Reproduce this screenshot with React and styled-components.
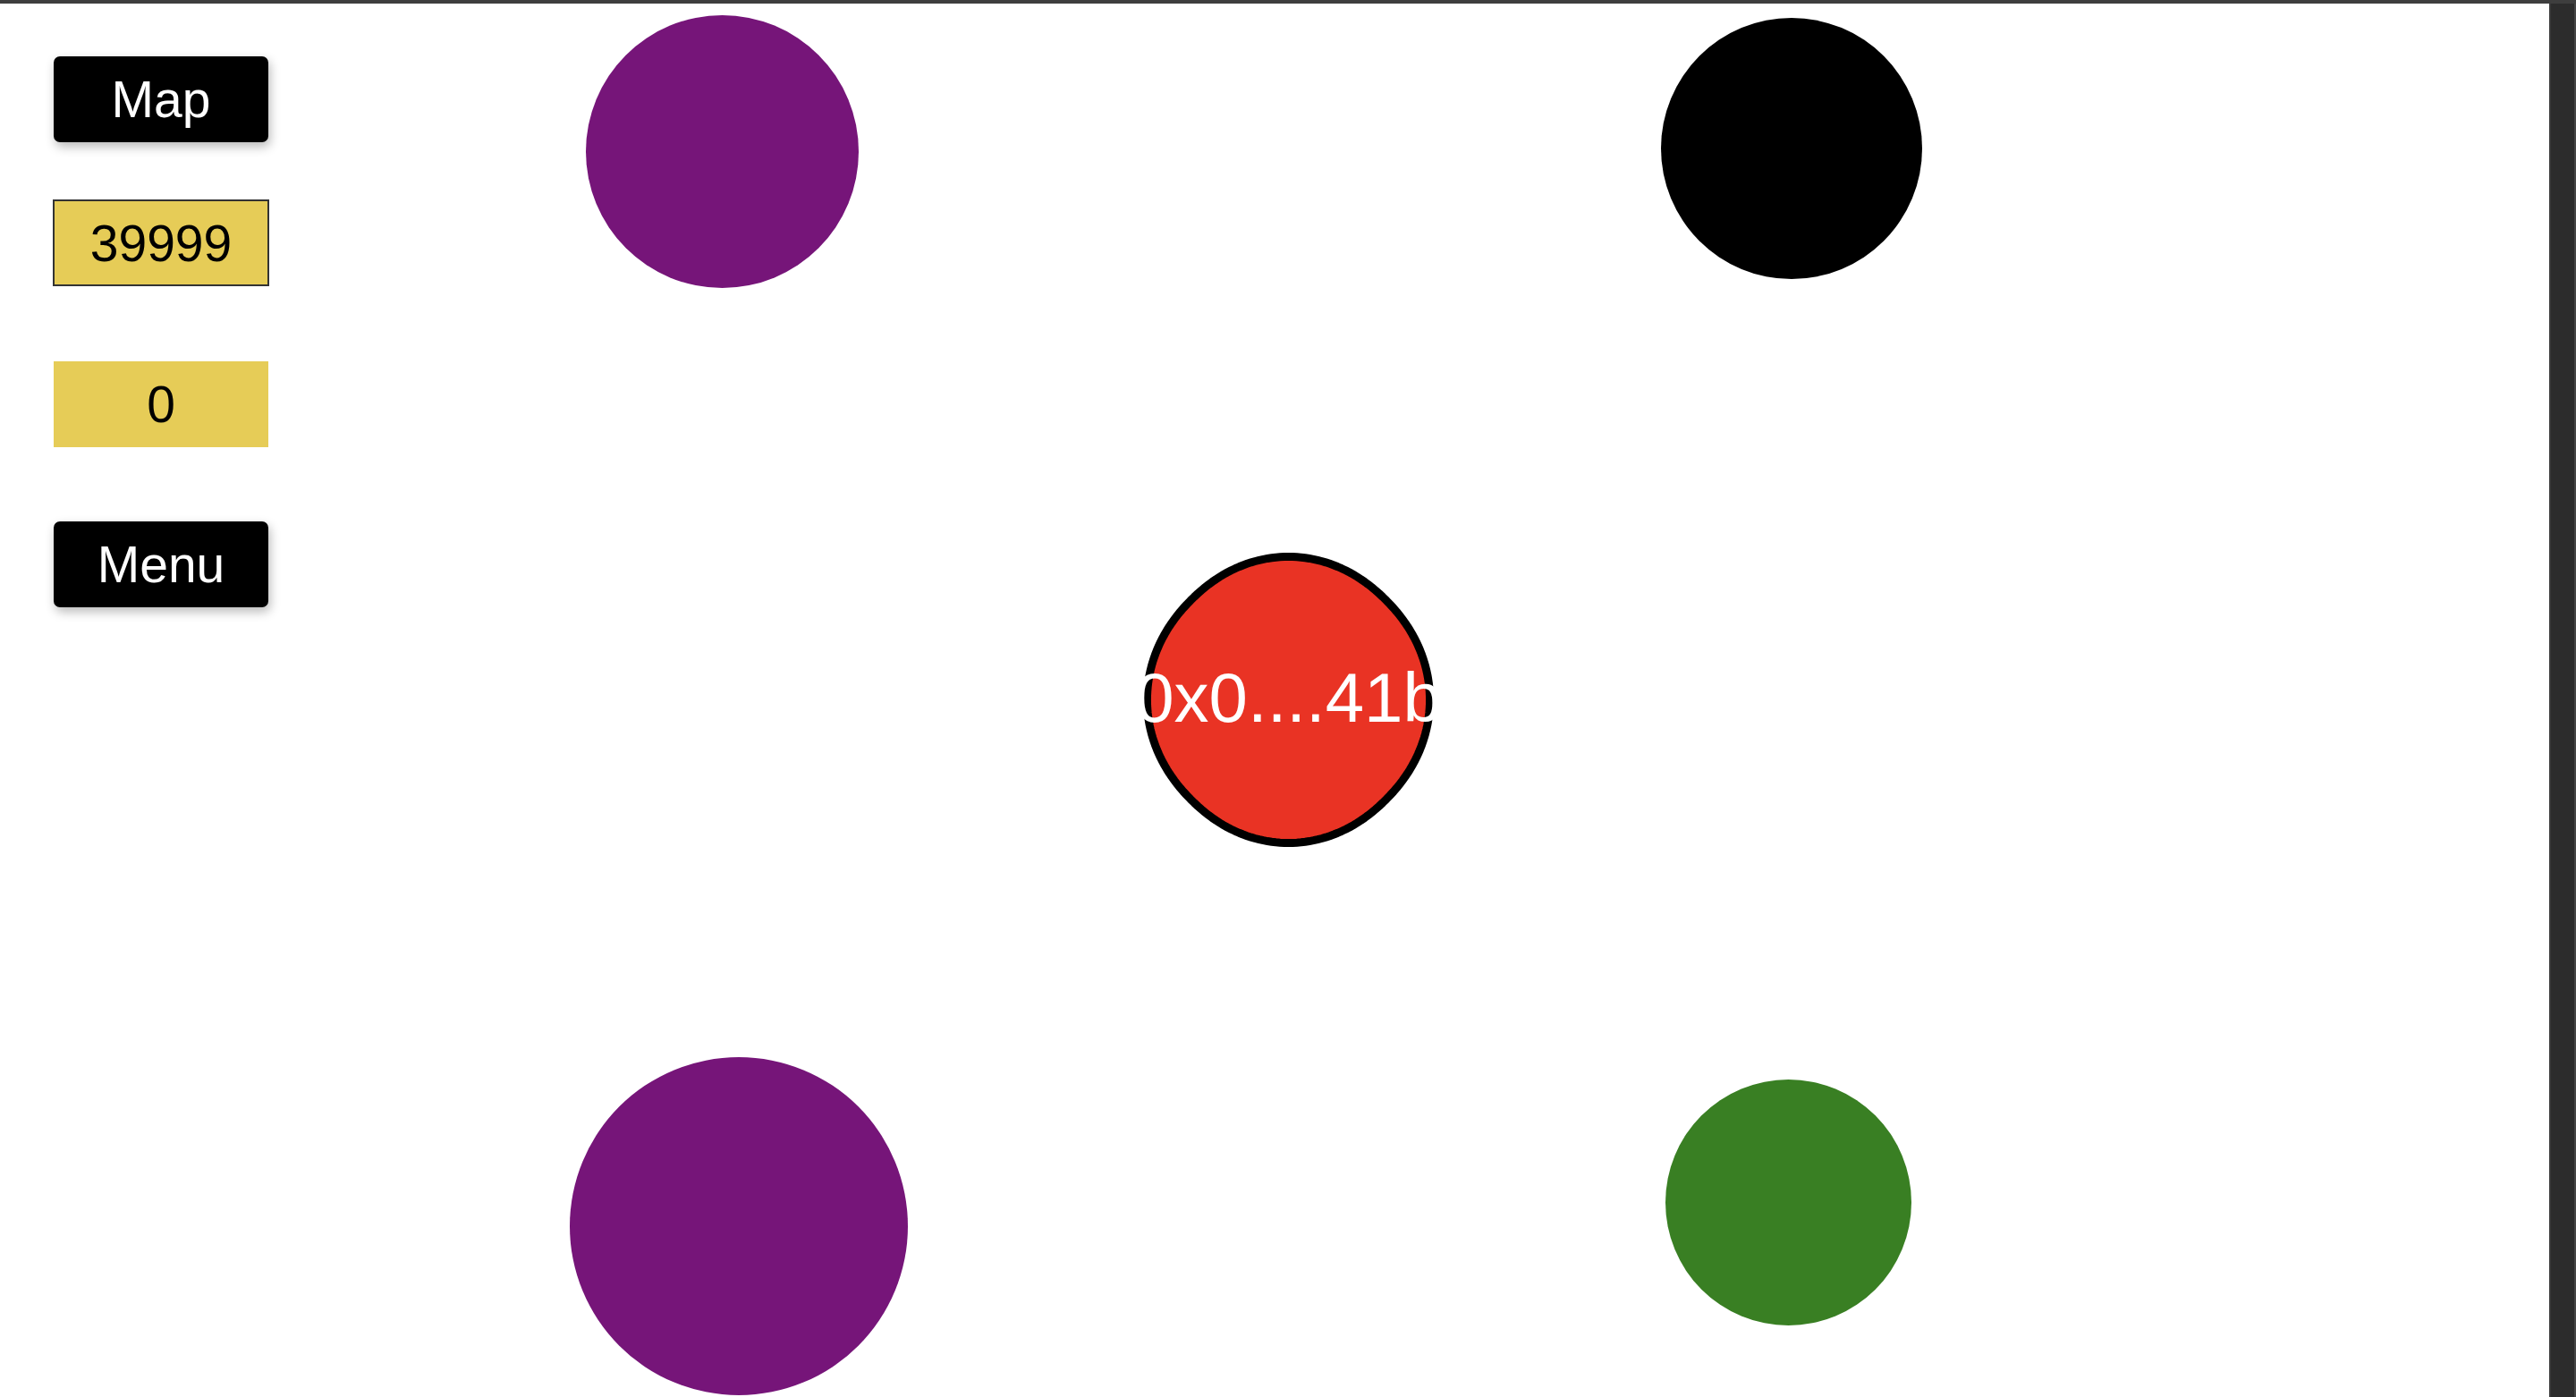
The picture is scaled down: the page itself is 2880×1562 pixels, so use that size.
import styled, { createGlobalStyle } from "styled-components";

const GlobalStyle = createGlobalStyle`
    html, body {
        margin: 0;
        padding: 0;
        background: #ffffff;
        font-family: "Liberation Sans", Arial, sans-serif;
    }
    * {
        box-sizing: border-box;
    }
`;

const Frame = styled.div`
    display: flex;
    flex-direction: column;
    width: 2880px;
    height: 1562px;
    overflow: hidden;
`;

const TopBar = styled.div`
    height: 4px;
    flex-shrink: 0;
    background: #3e3e3e;
`;

const Body = styled.div`
    display: flex;
    flex-direction: row;
    flex: 1;
    min-height: 0;
`;

const Stage = styled.div`
    position: relative;
    flex: 1;
    background: #ffffff;
    overflow: hidden;
`;

const ScrollTrack = styled.div`
    width: 30px;
    flex-shrink: 0;
    background: #2c2c2c;
    border-left: 2px solid #3a3a3a;
    border-right: 2px solid #454545;
`;

const Sidebar = styled.div`
    position: relative;
    z-index: 2;
    display: flex;
    flex-direction: column;
    align-items: flex-start;
    padding: 59px 0 0 60px;
`;

const ActionButton = styled.button`
    display: flex;
    align-items: center;
    justify-content: center;
    width: 240px;
    height: 96px;
    padding: 0;
    border: none;
    border-radius: 7px;
    background: #000000;
    color: #ffffff;
    font-family: "Liberation Sans", Arial, sans-serif;
    font-size: 57px;
    box-shadow: 2px 5px 12px rgba(0, 0, 0, 0.28);
    margin-bottom: ${(p) => p.$gap || 0}px;
    cursor: pointer;
`;

const Counter = styled.div`
    display: flex;
    align-items: center;
    justify-content: center;
    width: ${(p) => (p.$outlined ? 242 : 240)}px;
    height: ${(p) => (p.$outlined ? 97 : 96)}px;
    margin-left: ${(p) => (p.$outlined ? -1 : 0)}px;
    margin-bottom: ${(p) => p.$gap || 0}px;
    background: #e6cc57;
    border: ${(p) => (p.$outlined ? "2px solid #333333" : "none")};
    color: #000000;
    font-size: 57px;
`;

const Ball = styled.div`
    position: absolute;
    border-radius: 50%;
    background: ${(p) => p.$color};
`;

const Player = styled.div`
    position: absolute;
    display: flex;
    align-items: center;
    justify-content: center;
`;

const PlayerShape = styled.svg`
    position: absolute;
    left: 0;
    top: 0;
    overflow: visible;
`;

const PlayerName = styled.span`
    position: relative;
    top: -3px;
    color: #ffffff;
    font-size: 78px;
    line-height: 1;
    white-space: nowrap;
`;

const balls = [
    { x: 655, y: 13, d: 305, color: "#761579" },
    { x: 1857, y: 16, d: 292, color: "#000000" },
    { x: 637, y: 1178, d: 378, color: "#761579" },
    { x: 1862, y: 1203, d: 275, color: "#397f23" },
];

const player = { x: 1278, y: 614, w: 325, h: 329, name: "0x0....41b" };

// blob outline: superellipse turned 45deg, a little flatter on the diagonals
function blobPath(w, h, stroke) {
    const n = 2.12;
    const a = 159.5 - stroke / 2;
    const sy = h / w;
    const cx = w / 2;
    const cy = h / 2;
    const c = Math.SQRT1_2;
    const pts = [];
    for (let i = 0; i < 200; i++) {
        const t = (i / 200) * Math.PI * 2;
        const ct = Math.cos(t);
        const st = Math.sin(t);
        const u = Math.sign(ct) * Math.pow(Math.abs(ct), 2 / n) * a;
        const v = Math.sign(st) * Math.pow(Math.abs(st), 2 / n) * a;
        const x = (u - v) * c;
        const y = (u + v) * c * sy;
        pts.push(`${(cx + x).toFixed(2)},${(cy + y).toFixed(2)}`);
    }
    return `M${pts.join("L")}Z`;
}

export default function App() {
    return (
        <>
            <GlobalStyle />
            <Frame>
                <TopBar />
                <Body>
                    <Stage>
                        <Sidebar>
                            <ActionButton $gap={64}>Map</ActionButton>
                            <Counter $outlined $gap={84}>39999</Counter>
                            <Counter $gap={83}>0</Counter>
                            <ActionButton>Menu</ActionButton>
                        </Sidebar>
                        {balls.map((b, i) => (
                            <Ball
                                key={i}
                                $color={b.color}
                                style={{ left: b.x, top: b.y, width: b.d, height: b.d }}
                            />
                        ))}
                        <Player
                            style={{
                                left: player.x,
                                top: player.y,
                                width: player.w,
                                height: player.h,
                            }}
                        >
                            <PlayerShape width={player.w} height={player.h}>
                                <path
                                    d={blobPath(player.w, player.h, 9)}
                                    fill="#e93324"
                                    stroke="#000000"
                                    strokeWidth="9"
                                    strokeLinejoin="round"
                                />
                            </PlayerShape>
                            <PlayerName>{player.name}</PlayerName>
                        </Player>
                    </Stage>
                    <ScrollTrack />
                </Body>
            </Frame>
        </>
    );
}
